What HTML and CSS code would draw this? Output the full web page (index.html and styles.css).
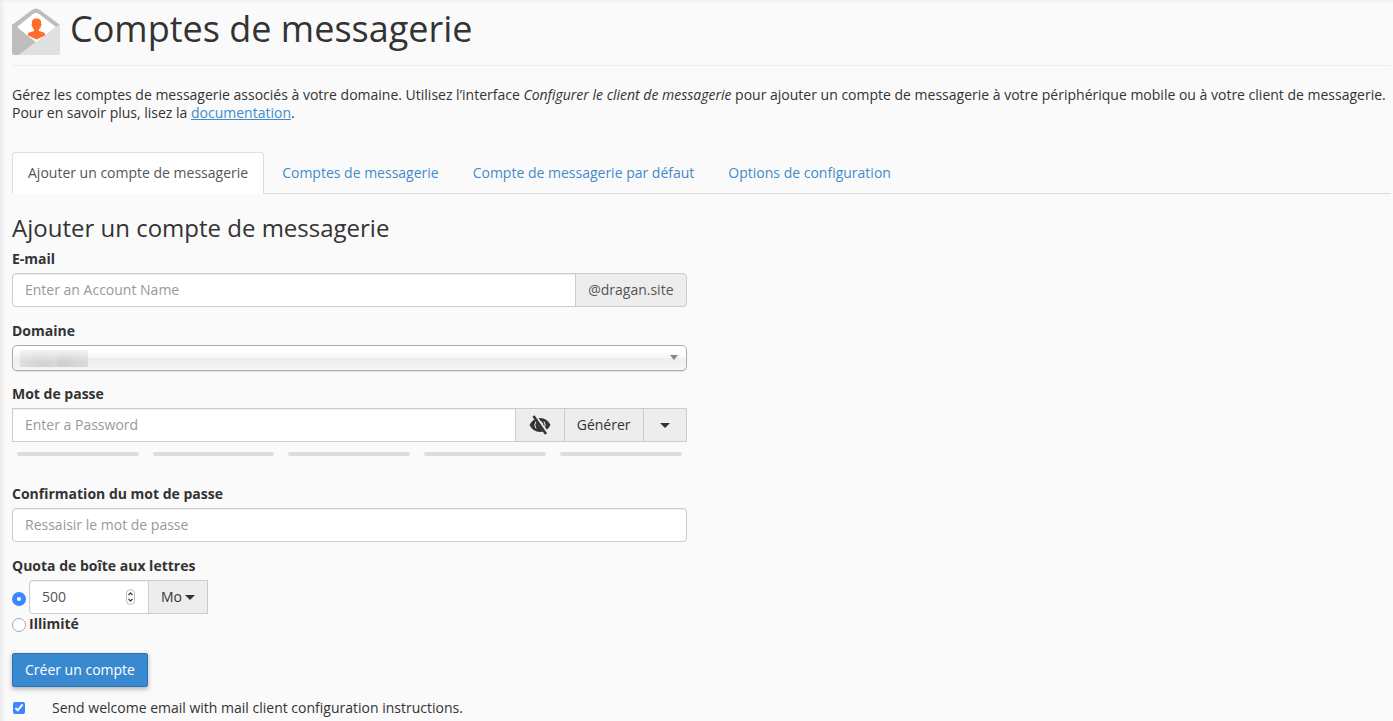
FILE: index.html
```html
<!DOCTYPE html>
<html lang="fr">
<head>
    <meta charset="UTF-8">
    <meta name="viewport" content="width=device-width, initial-scale=1.0">
    <title>Comptes de messagerie</title>
    <link rel="stylesheet" href="styles.css">
</head>
<body>
    <main class="content">
        <header class="page-header">
            <svg class="page-icon" width="48" height="48" viewBox="0 0 48 48" aria-hidden="true">
                <path fill="#bdbdbd" d="M0 17 20 2q4-3 8 0l20 15v9H0z"/>
                <path fill="#fff" d="M5 19 21 6q3-2 6 0l17 13-20 16z"/>
                <path fill="#bdbdbd" d="M0 16 24 34 7 47H2q-2 0-2-2z"/>
                <path fill="#e0e0e0" d="M48 16v29q0 2-2 2H7z"/>
                <path fill="#ff6c2c" d="M24.500 10.500c3.500 0 5 2 4.500 5q1 1 0 2.500-.5 2-2 3.500v1.500l5 1.500q1.500 1 1 3L24.500 31.500 16 27.500q-.5-2 1-3l5-1.500v-1.500q-1.500-1.500-2-3.500-1-1.500 0-2.500c-.5-3 1-5 4.500-5z"/>
            </svg>
            <h1>Comptes de messagerie</h1>
        </header>

        <p class="intro">Gérez les comptes de messagerie associés à votre domaine. Utilisez l’interface <em>Configurer le client de messagerie</em> pour ajouter un compte de messagerie à votre périphérique mobile ou à votre client de messagerie. Pour en savoir plus, lisez la <a href="#">documentation</a>.</p>

        <!-- Tabs -->
        <nav class="tabs">
            <a href="#" class="tab active">Ajouter un compte de messagerie</a>
            <a href="#" class="tab">Comptes de messagerie</a>
            <a href="#" class="tab">Compte de messagerie par défaut</a>
            <a href="#" class="tab">Options de configuration</a>
        </nav>

        <h2>Ajouter un compte de messagerie</h2>

        <form class="account-form">
            <div class="form-group">
                <label for="email">E-mail</label>
                <div class="input-group">
                    <input type="text" id="email" class="form-control" placeholder="Enter an Account Name">
                    <span class="addon addon-last">@dragan.site</span>
                </div>
            </div>

            <div class="form-group">
                <label for="domain">Domaine</label>
                <div class="select-wrap">
                    <select id="domain" class="domain-select">
                        <option></option>
                    </select>
                    <span class="redacted"></span>
                    <svg class="select-arrow" width="8" height="5" viewBox="0 0 8 5" aria-hidden="true"><path fill="#888" d="M0 0h8L4 5z"/></svg>
                </div>
            </div>

            <div class="form-group password-group">
                <label for="password">Mot de passe</label>
                <div class="input-group square">
                    <input type="password" id="password" class="form-control" placeholder="Enter a Password">
                    <button type="button" class="addon" aria-label="Afficher le mot de passe">
                        <svg width="22" height="20" viewBox="0 0 22 20" aria-hidden="true">
                            <path fill="#333" d="M.5 10Q4 3 11 3t10.500 7q-3.500 7-10.500 7T.5 10z"/>
                            <path fill="none" stroke="#ededed" stroke-width="1" d="M7 6.500q-2.500 3.500 0 7M15 13.500q2.500-3.500 0-7M11.500 6.500q2 .5 2 2.500"/>
                            <path stroke="#ededed" stroke-width="4" d="m5.500 1 13 18"/>
                            <path stroke="#333" stroke-width="2.500" d="m4.500 1 12.500 18"/>
                        </svg>
                    </button>
                    <button type="button" class="addon">Générer</button>
                    <button type="button" class="addon addon-menu" aria-label="Options du mot de passe"><span class="caret"></span></button>
                </div>
                <div class="strength">
                    <span></span><span></span><span></span><span></span><span></span>
                </div>
            </div>

            <div class="form-group">
                <label for="confirm">Confirmation du mot de passe</label>
                <input type="password" id="confirm" class="form-control" placeholder="Ressaisir le mot de passe">
            </div>

            <div class="form-group quota-group">
                <label for="quota">Quota de boîte aux lettres</label>
                <div class="radio-row">
                    <input type="radio" name="quotaType" class="radio" aria-label="Quota" checked>
                    <div class="number-wrap">
                        <input type="number" id="quota" class="form-control" value="500">
                        <svg class="spinner" width="9" height="16" viewBox="0 0 9 16" aria-hidden="true">
                            <rect x=".5" y=".5" width="8" height="15" rx="4" fill="#fff" stroke="#bbb"/>
                            <path fill="none" stroke="#444" stroke-width="1.300" d="M2.500 6l2-2 2 2M2.500 10l2 2 2-2"/>
                        </svg>
                    </div>
                    <button type="button" class="addon unit-btn">Mo <span class="caret"></span></button>
                </div>
                <div class="radio-row">
                    <input type="radio" name="quotaType" id="unlimited" class="radio">
                    <label for="unlimited">Illimité</label>
                </div>
            </div>

            <button type="submit" class="btn-primary">Créer un compte</button>

            <div class="welcome-row">
                <input type="checkbox" id="welcome" class="checkbox" checked>
                <label for="welcome">Send welcome email with mail client configuration instructions.</label>
            </div>
        </form>
    </main>
</body>
</html>
```
FILE: styles.css
```css
* {
    margin: 0;
    padding: 0;
    box-sizing: border-box;
}

body {
    background-color: #fafafa;
    box-shadow: inset 4px 2px 4px -2px #e8e8e8;
    color: #333;
    font-family: 'Open Sans', sans-serif;
    font-size: 14px;
    line-height: 18px;
}

.content {
    padding: 0 2px 4px 12px;
}

.page-header {
    display: flex;
    align-items: center;
    gap: 10px;
    height: 66px;
    padding-bottom: 1px;
    border-bottom: 1px solid #eee;
}

h1 {
    font-size: 36px;
    font-weight: 400;
    line-height: 40px;
    padding-bottom: 6px;
}

.intro {
    margin: 20px 0 30px;
}

a {
    color: #428bca;
}

/* Tabs */
.tabs {
    display: flex;
    gap: 2px;
    border-bottom: 1px solid #ddd;
}

.tab {
    padding: 11px 15px 12px;
    border: 1px solid transparent;
    border-bottom: none;
    border-radius: 4px 4px 0 0;
    margin-bottom: -1px;
    text-decoration: none;
}

.tab.active {
    background-color: #fff;
    border-color: #ddd;
    color: #555;
}

h2 {
    font-size: 24px;
    font-weight: 400;
    line-height: 26px;
    margin: 21px 0 9px;
}

/* Form */
.account-form {
    width: calc(50% - 15px);
}

.form-group {
    margin-bottom: 15px;
}

.form-group label {
    display: block;
    font-weight: 700;
    margin-bottom: 5px;
}

input,
select,
button {
    font: inherit;
    color: inherit;
}

.form-control {
    width: 100%;
    height: 34px;
    padding: 5px 12px 7px;
    background-color: #fff;
    border: 1px solid #ccc;
    border-radius: 4px;
    box-shadow: inset 0 1px 1px rgba(0, 0, 0, 0.075);
    color: #555;
}

.form-control::placeholder {
    color: #999;
    opacity: 1;
}

.input-group {
    display: flex;
}

.input-group .form-control {
    flex: 1;
    min-width: 0;
    border-radius: 4px 0 0 4px;
}

.input-group.square .form-control {
    border-radius: 0;
}

.addon {
    display: flex;
    align-items: center;
    justify-content: center;
    gap: 3px;
    height: 34px;
    padding: 0 12px;
    margin-left: -1px;
    background-color: #ededed;
    border: 1px solid #ccc;
}

.addon-last {
    border-radius: 0 4px 4px 0;
    color: #555;
}

.addon svg {
    margin: 0 1px;
}

.addon-menu {
    width: 44px;
}

.caret {
    border-top: 5px solid #333;
    border-left: 5px solid transparent;
    border-right: 5px solid transparent;
}

.select-wrap {
    position: relative;
    height: 25px;
}

.domain-select {
    display: block;
    width: 100%;
    height: 26px;
    appearance: none;
    background: linear-gradient(#fff 20%, #f6f6f6 50%, #eee 52%, #f4f4f4 100%);
    border: 1px solid #aaa;
    border-radius: 5px;
    box-shadow: inset 0 0 3px #fff, 0 1px 1px rgba(0, 0, 0, 0.1);
}

.redacted {
    position: absolute;
    left: 8px;
    top: 5px;
    width: 68px;
    height: 17px;
    background:
        linear-gradient(rgba(246, 246, 246, 0.9), rgba(246, 246, 246, 0) 70%),
        linear-gradient(90deg, #dedede, #d2d2d2 35%, #d8d8d8 50%, #cfcfcf 60%, #dadada);
    pointer-events: none;
}

.select-arrow {
    position: absolute;
    right: 9px;
    top: 10px;
    pointer-events: none;
}

.password-group {
    margin-bottom: 29px;
}

.strength {
    display: flex;
    gap: 14px;
    padding: 10px 5px 0;
}

.strength span {
    flex: 1;
    height: 4px;
    background-color: #ddd;
    border-radius: 2px;
}

/* Quota */
.radio-row {
    display: flex;
    align-items: center;
    gap: 3px;
}

.form-group .radio-row label {
    margin: 1px 0 0;
}

.radio {
    appearance: none;
    width: 14px;
    height: 14px;
    margin-top: 3px;
    background-color: #fff;
    border: 1px solid #aaa;
    border-radius: 50%;
}

.radio:checked {
    background-color: #fff;
    border: 5px solid #3b86fc;
}

.number-wrap {
    position: relative;
    width: 120px;
}

.number-wrap .form-control {
    border-radius: 4px 0 0 4px;
    appearance: textfield;
}

.number-wrap .form-control::-webkit-inner-spin-button {
    appearance: none;
}

.spinner {
    position: absolute;
    right: 14px;
    top: 9px;
    pointer-events: none;
}

.unit-btn {
    margin-left: -4px;
}

.quota-group {
    margin-bottom: 20px;
}

.btn-primary {
    display: block;
    height: 34px;
    padding: 0 12px;
    background-color: #3889d0;
    border: 1px solid #2b73b5;
    border-radius: 2px;
    box-shadow: 0 2px 5px rgba(0, 0, 0, 0.3);
    color: #fff;
}

.welcome-row {
    display: flex;
    align-items: center;
    gap: 27px;
    margin-top: 12px;
}

.checkbox {
    width: 12px;
    height: 12px;
    margin-left: 1px;
    accent-color: #3b86fc;
}
```
